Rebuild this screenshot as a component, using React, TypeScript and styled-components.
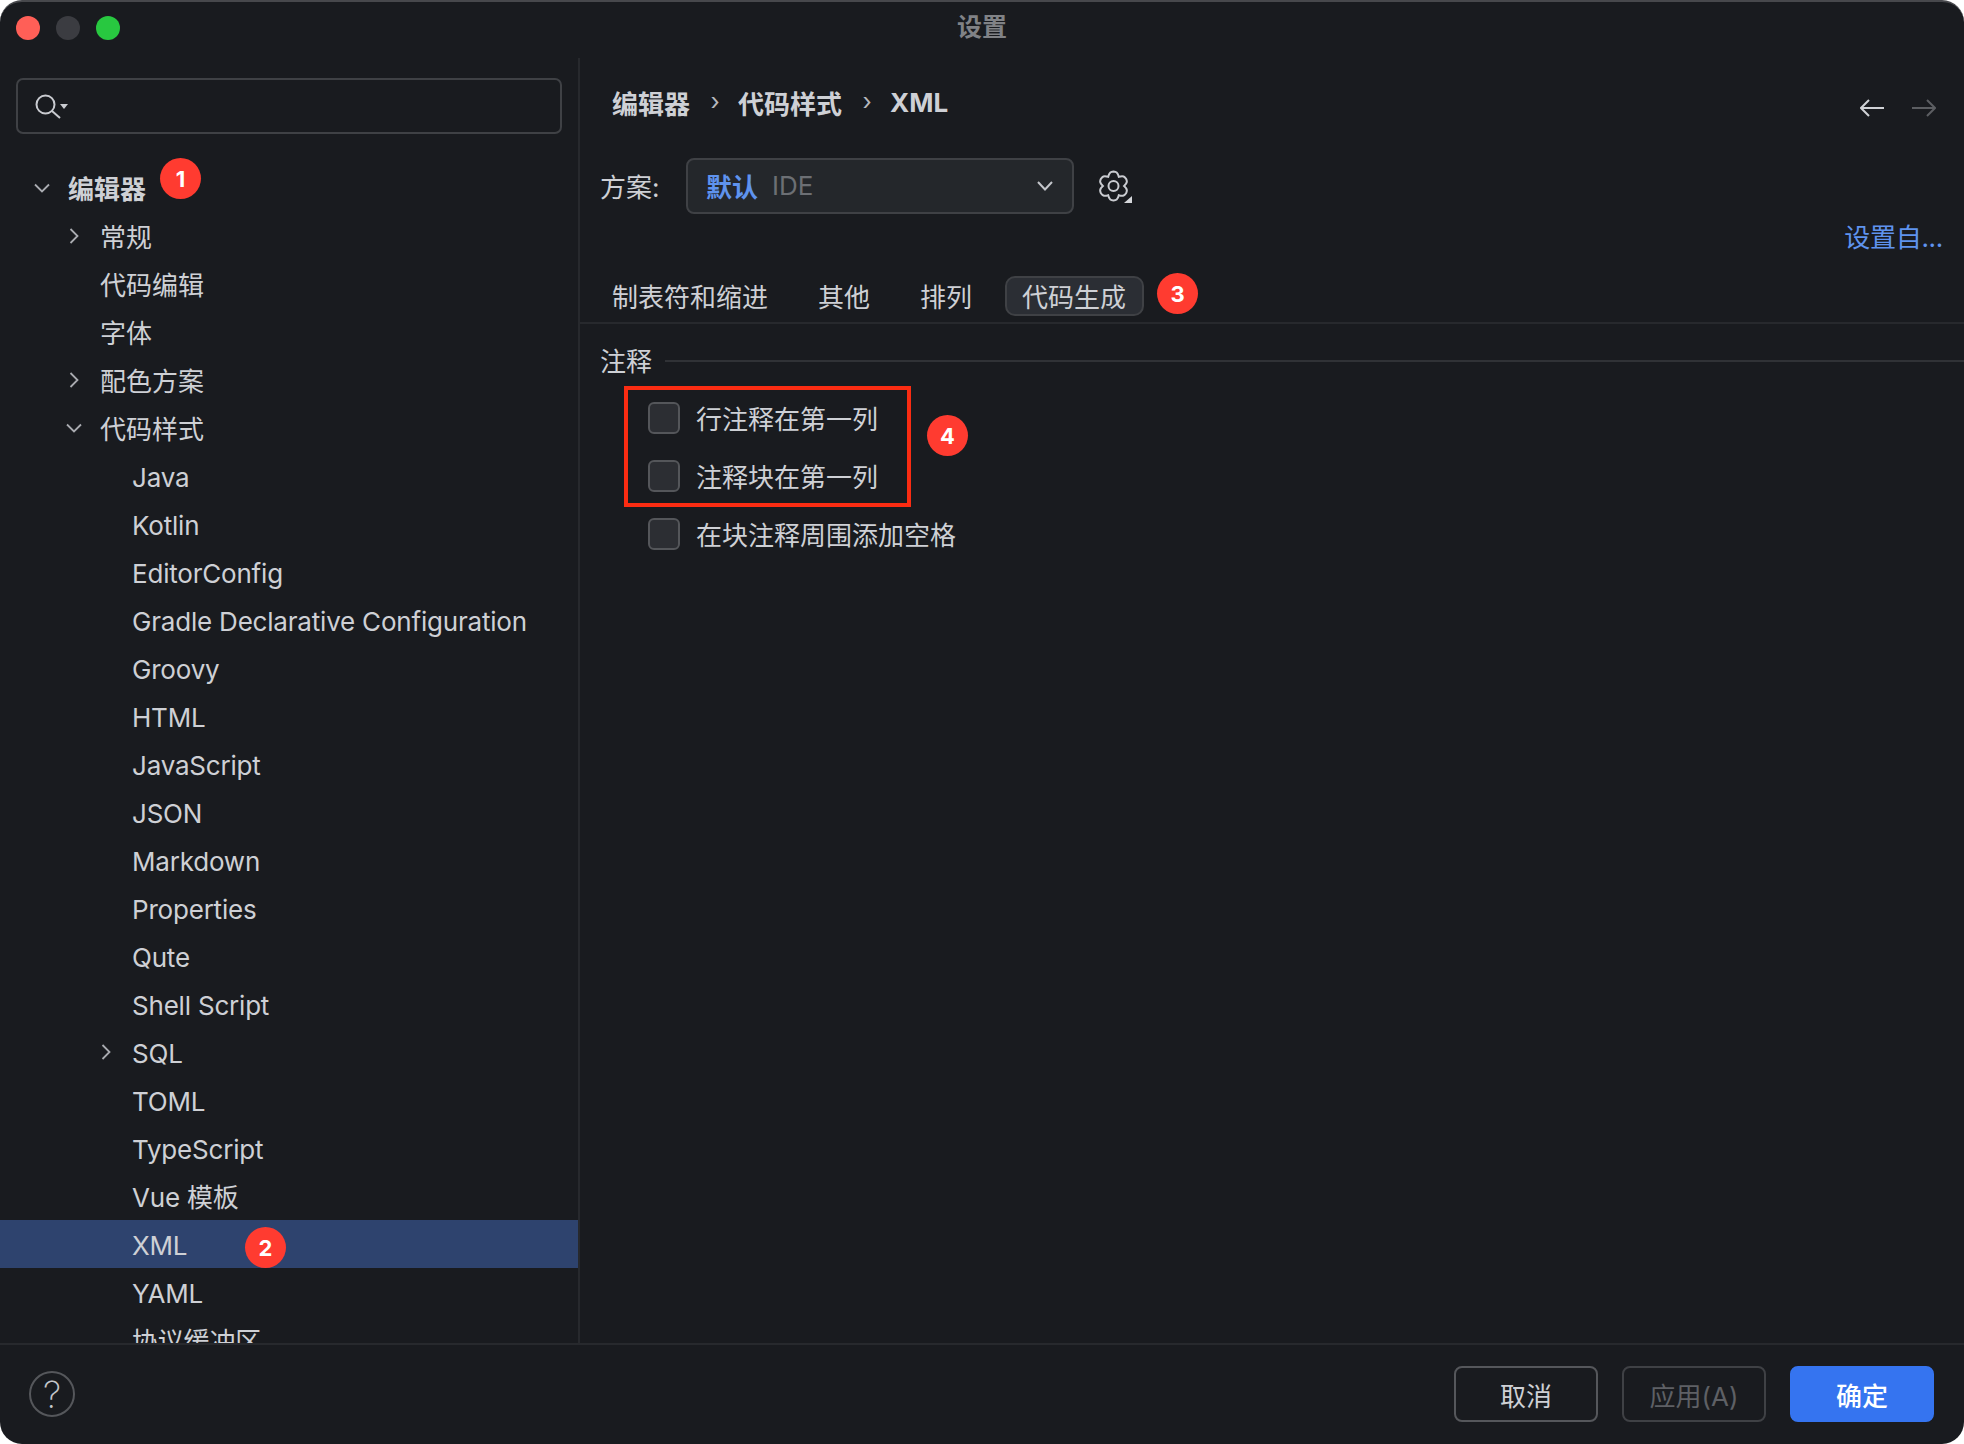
import React from 'react'
import styled, { createGlobalStyle } from 'styled-components'

const GlobalStyle = createGlobalStyle`
	html, body {
		margin: 0;
		padding: 0;
		background: #ffffff;
	}
	body {
		font-family: Inter, "Noto Sans CJK SC", sans-serif;
		-webkit-font-smoothing: antialiased;
	}
`

const TEXT = '#ced0d5'
const BLUE = '#5f93ee'
const LINE = '#27292d'

interface TreeItem {
	label: string
	level: number
	arrow?: 'right' | 'down'
	bold?: boolean
	selected?: boolean
	badge?: { value: string; left: number; top: number }
}

const treeItems: TreeItem[] = [
	{ label: '编辑器', level: 0, arrow: 'down', bold: true, badge: { value: '1', left: 160, top: -6 } },
	{ label: '常规', level: 1, arrow: 'right' },
	{ label: '代码编辑', level: 1 },
	{ label: '字体', level: 1 },
	{ label: '配色方案', level: 1, arrow: 'right' },
	{ label: '代码样式', level: 1, arrow: 'down' },
	{ label: 'Java', level: 2 },
	{ label: 'Kotlin', level: 2 },
	{ label: 'EditorConfig', level: 2 },
	{ label: 'Gradle Declarative Configuration', level: 2 },
	{ label: 'Groovy', level: 2 },
	{ label: 'HTML', level: 2 },
	{ label: 'JavaScript', level: 2 },
	{ label: 'JSON', level: 2 },
	{ label: 'Markdown', level: 2 },
	{ label: 'Properties', level: 2 },
	{ label: 'Qute', level: 2 },
	{ label: 'Shell Script', level: 2 },
	{ label: 'SQL', level: 2, arrow: 'right' },
	{ label: 'TOML', level: 2 },
	{ label: 'TypeScript', level: 2 },
	{ label: 'Vue 模板', level: 2 },
	{ label: 'XML', level: 2, selected: true, badge: { value: '2', left: 245, top: 7 } },
	{ label: 'YAML', level: 2 },
	{ label: '协议缓冲区', level: 2 },
]

// six soft lobes, like the IDE's settings glyph
const gearPath = (cx: number, cy: number, outer: number, notch: number) => {
	const pt = (deg: number, r: number) => {
		const a = (deg * Math.PI) / 180
		return `${(cx + r * Math.cos(a)).toFixed(2)} ${(cy + r * Math.sin(a)).toFixed(2)}`
	}
	let d = `M${pt(-120, notch)}`
	for (let i = 0; i < 6; i++) {
		const a = -90 + i * 60
		d += ` C${pt(a - 17, outer)} ${pt(a - 10, outer)} ${pt(a, outer)}`
		d += ` C${pt(a + 10, outer)} ${pt(a + 17, outer)} ${pt(a + 30, notch)}`
	}
	return d + 'Z'
}

const Chevron: React.FC<{ dir: 'right' | 'down' }> = ({ dir }) => (
	<svg width="18" height="18" viewBox="0 0 18 18" fill="none" stroke="#a9abb0" strokeWidth="1.8">
		{dir === 'down' ? <path d="M2 5.5 L9 12.5 L16 5.5" /> : <path d="M5.5 2 L12.5 9 L5.5 16" />}
	</svg>
)

export default function App() {
	return (
		<>
			<GlobalStyle />
			<Window>
				<TitleBar>
					<Lights>
						<Light $color="#ff5f57" />
						<Light $color="#3b3c41" />
						<Light $color="#28c840" />
					</Lights>
					<Title>设置</Title>
				</TitleBar>

				<Body>
					<Sidebar>
						<Search>
							<svg width="34" height="28" viewBox="0 0 34 28" fill="none">
								<circle cx="10.5" cy="12.5" r="9" stroke="#c9cbd0" strokeWidth="2" />
								<path d="M17 19 L25 26" stroke="#c9cbd0" strokeWidth="2" />
								<path d="M25 12 L33 12 L29 17 Z" fill="#c9cbd0" />
							</svg>
						</Search>
						<Tree>
							{treeItems.map((item) => (
								<Row key={item.label} $level={item.level} $selected={item.selected}>
									<ArrowSlot>{item.arrow && <Chevron dir={item.arrow} />}</ArrowSlot>
									<RowLabel $bold={item.bold} $level={item.level} $ascii={/^[\x00-\x7f]+$/.test(item.label)}>
										{item.label}
									</RowLabel>
									{item.badge && (
										<RowBadge $left={item.badge.left} $top={item.badge.top}>
											{item.badge.value}
										</RowBadge>
									)}
								</Row>
							))}
						</Tree>
					</Sidebar>

					<Panel>
						<CrumbBar>
							<Crumb>编辑器</Crumb>
							<CrumbSep>›</CrumbSep>
							<Crumb>代码样式</Crumb>
							<CrumbSep>›</CrumbSep>
							<Crumb>XML</Crumb>
							<NavArrows>
								<svg width="24" height="20" viewBox="0 0 24 20" fill="none" stroke="#d0d2d6" strokeWidth="2">
									<path d="M24 10 H1 M9 2 L1 10 L9 18" />
								</svg>
								<svg width="24" height="20" viewBox="0 0 24 20" fill="none" stroke="#5c5e62" strokeWidth="2">
									<path d="M0 10 H23 M15 2 L23 10 L15 18" />
								</svg>
							</NavArrows>
						</CrumbBar>

						<SchemeRow>
							<SchemeLabel>方案:</SchemeLabel>
							<Combo>
								<ComboName>默认</ComboName>
								<ComboHint>IDE</ComboHint>
								<ComboArrow>
									<svg width="18" height="12" viewBox="0 0 18 12" fill="none" stroke="#c3c5ca" strokeWidth="2">
										<path d="M2 2 L9 9.5 L16 2" />
									</svg>
								</ComboArrow>
							</Combo>
							<GearButton>
								<svg width="34" height="36" viewBox="0 0 34 36" fill="none">
									<path d={gearPath(14.5, 16, 14.5, 10.6)} stroke="#c9cbd0" strokeWidth="2" />
									<circle cx="14.5" cy="16" r="5" stroke="#c9cbd0" strokeWidth="2" />
									<path d="M33 26 V33 H25 Z" fill="#d5d7db" />
								</svg>
							</GearButton>
						</SchemeRow>

						<LinkRow>
							<SetLink>设置自...</SetLink>
						</LinkRow>

						<Tabs>
							<Tab>制表符和缩进</Tab>
							<Tab>其他</Tab>
							<Tab>排列</Tab>
							<Tab $active>
								代码生成
								<TabBadge>3</TabBadge>
							</Tab>
						</Tabs>

						<SectionHead>
							<SectionTitle>注释</SectionTitle>
							<SectionLine />
						</SectionHead>

						<Highlight>
							<Option>
								<Check />
								<OptionText>行注释在第一列</OptionText>
							</Option>
							<Option>
								<Check />
								<OptionText>注释块在第一列</OptionText>
							</Option>
							<HighlightBadge>4</HighlightBadge>
						</Highlight>
						<PlainOption>
							<Check />
							<OptionText>在块注释周围添加空格</OptionText>
						</PlainOption>
					</Panel>
				</Body>

				<Footer>
					<Help>?</Help>
					<Actions>
						<Button>取消</Button>
						<Button $disabled>应用(A)</Button>
						<Button $primary>确定</Button>
					</Actions>
				</Footer>
			</Window>
		</>
	)
}

const Window = styled.div`
	width: 1964px;
	height: 1444px;
	box-sizing: border-box;
	display: flex;
	flex-direction: column;
	overflow: hidden;
	background: #191b1f;
	border-top: 2px solid #47484c;
	border-radius: 22px;
	color: ${TEXT};
	font-size: 26px;
`

const TitleBar = styled.div`
	flex: 0 0 56px;
	position: relative;
	display: flex;
	align-items: center;
	justify-content: center;
`

const Lights = styled.div`
	position: absolute;
	left: 16px;
	top: 14px;
	display: flex;
	gap: 16px;
`

const Light = styled.span<{ $color: string }>`
	width: 24px;
	height: 24px;
	border-radius: 50%;
	background: ${(p) => p.$color};
`

const Title = styled.div`
	font-size: 25px;
	font-weight: 700;
	color: #808286;
	margin-top: -10px;
`

const Body = styled.div`
	flex: 1;
	display: flex;
	min-height: 0;
`

const Sidebar = styled.aside`
	width: 578px;
	flex: none;
	border-right: 2px solid ${LINE};
	display: flex;
	flex-direction: column;
	min-height: 0;
`

const Search = styled.div`
	box-sizing: border-box;
	width: 546px;
	height: 56px;
	margin: 20px 0 0 16px;
	padding-left: 17px;
	display: flex;
	align-items: center;
	border: 2px solid #3f4145;
	border-radius: 7px;
`

const Tree = styled.div`
	flex: 1;
	margin-top: 20px;
	padding-top: 10px;
	overflow: hidden;
`

const Row = styled.div<{ $level: number; $selected?: boolean }>`
	position: relative;
	height: 48px;
	display: flex;
	align-items: center;
	padding-left: ${(p) => 25 + p.$level * 32}px;
	background: ${(p) => (p.$selected ? '#2e436e' : 'transparent')};
`

const ArrowSlot = styled.span`
	width: 34px;
	display: flex;
	justify-content: center;
	align-items: center;
	margin-right: 9px;
`

const RowLabel = styled.span<{ $bold?: boolean; $level: number; $ascii: boolean }>`
	font-weight: ${(p) => (p.$bold ? 700 : 400)};
	white-space: nowrap;
	letter-spacing: ${(p) => (p.$level === 2 ? '-0.2px' : '0')};
	margin-top: ${(p) => (p.$ascii ? '2px' : '-2px')};
`

const Badge = styled.span`
	position: absolute;
	width: 41px;
	height: 41px;
	border-radius: 50%;
	background: #ff3b30;
	color: #ffffff;
	font-size: 22px;
	font-weight: 700;
	display: flex;
	align-items: center;
	justify-content: center;
`

const RowBadge = styled(Badge)<{ $left: number; $top: number }>`
	left: ${(p) => p.$left}px;
	top: ${(p) => p.$top}px;
`

const Panel = styled.main`
	flex: 1;
	min-width: 0;
	display: flex;
	flex-direction: column;
`

const CrumbBar = styled.div`
	height: 88px;
	margin-bottom: 2px;
	display: flex;
	align-items: center;
	padding: 0 28px 0 32px;
	box-sizing: border-box;
`

const Crumb = styled.span`
	font-weight: 700;
	white-space: nowrap;
`

const CrumbSep = styled.span`
	width: 48px;
	padding-left: 2px;
	box-sizing: border-box;
	text-align: center;
	font-size: 24px;
	color: #b6b8bd;
	margin-top: -2px;
`

const NavArrows = styled.div`
	margin-left: auto;
	margin-top: 12px;
	display: flex;
	gap: 28px;
`

const SchemeRow = styled.div`
	height: 56px;
	margin-top: 10px;
	padding-left: 20px;
	display: flex;
	align-items: center;
`

const SchemeLabel = styled.span`
	width: 86px;
	margin-top: -2px;
`

const Combo = styled.div`
	box-sizing: border-box;
	width: 388px;
	height: 56px;
	padding: 0 18px 2px;
	display: flex;
	align-items: center;
	background: #24272b;
	border: 2px solid #3f4145;
	border-radius: 8px;
`

const ComboName = styled.span`
	color: ${BLUE};
	font-weight: 700;
`

const ComboHint = styled.span`
	color: #6c6f74;
	margin-left: 14px;
`

const ComboArrow = styled.span`
	margin: 2px 0 0 auto;
	display: flex;
`

const GearButton = styled.span`
	align-self: flex-start;
	margin: 12px 0 0 25px;
	display: flex;
`

const LinkRow = styled.div`
	height: 45px;
	display: flex;
	align-items: center;
	justify-content: flex-end;
	padding-right: 21px;
`

const SetLink = styled.span`
	color: ${BLUE};
	letter-spacing: -0.3px;
	margin-top: -2px;
`

const Tabs = styled.div`
	height: 65px;
	box-sizing: border-box;
	padding: 17px 0 0 32px;
	display: flex;
	align-items: flex-start;
	gap: 50px;
	border-bottom: 2px solid ${LINE};
`

const Tab = styled.div<{ $active?: boolean }>`
	position: relative;
	box-sizing: border-box;
	height: 40px;
	padding-bottom: 2px;
	display: flex;
	align-items: center;
	white-space: nowrap;
	${(p) =>
		p.$active &&
		`
		margin-left: -17px;
		padding: 0 16px 2px 15px;
		background: #2b2e34;
		border: 2px solid #3f4145;
		border-radius: 10px;
	`}
`

const TabBadge = styled(Badge)`
	left: 150px;
	top: -5px;
`

const SectionHead = styled.div`
	height: 62px;
	box-sizing: border-box;
	padding: 12px 0 0 20px;
	display: flex;
	align-items: center;
	gap: 13px;
`

const SectionTitle = styled.span`
	white-space: nowrap;
	margin-top: -4px;
`

const SectionLine = styled.div`
	flex: 1;
	height: 2px;
	background: #303236;
`

const Highlight = styled.div`
	position: relative;
	box-sizing: border-box;
	width: 287px;
	height: 121px;
	margin-left: 44px;
	padding: 5px 0 0 20px;
	display: flex;
	flex-direction: column;
	gap: 12px;
	border: 4px solid #fb2c12;
`

const HighlightBadge = styled(Badge)`
	left: 299px;
	top: 25px;
`

const Option = styled.label`
	height: 46px;
	display: flex;
	align-items: center;
	gap: 16px;
	white-space: nowrap;
`

const OptionText = styled.span`
	margin-top: -1px;
`

const PlainOption = styled(Option)`
	margin: 4px 0 0 68px;
`

const Check = styled.span`
	box-sizing: border-box;
	width: 32px;
	height: 32px;
	flex: none;
	background: #2c2e33;
	border: 2px solid #54565a;
	border-radius: 6px;
`

const Footer = styled.footer`
	flex: 0 0 101px;
	box-sizing: border-box;
	border-top: 2px solid ${LINE};
	padding: 21px 30px 0 29px;
	display: flex;
	align-items: flex-start;
	justify-content: space-between;
`

const Help = styled.div`
	box-sizing: border-box;
	width: 46px;
	height: 46px;
	margin-top: 5px;
	border: 2px solid #55575b;
	border-radius: 50%;
	display: flex;
	align-items: center;
	justify-content: center;
	font-size: 37px;
	font-weight: 200;
	color: #c4c6cb;
`

const Actions = styled.div`
	display: flex;
	gap: 24px;
`

const Button = styled.div<{ $primary?: boolean; $disabled?: boolean }>`
	box-sizing: border-box;
	width: 144px;
	height: 56px;
	display: flex;
	align-items: center;
	justify-content: center;
	border-radius: 8px;
	border: 2px solid ${(p) => (p.$primary ? '#3574f0' : p.$disabled ? '#3f4145' : '#55575b')};
	background: ${(p) => (p.$primary ? '#3574f0' : 'transparent')};
	color: ${(p) => (p.$primary ? '#ffffff' : p.$disabled ? '#5e6065' : TEXT)};
	font-weight: ${(p) => (p.$primary ? 500 : 400)};
`
